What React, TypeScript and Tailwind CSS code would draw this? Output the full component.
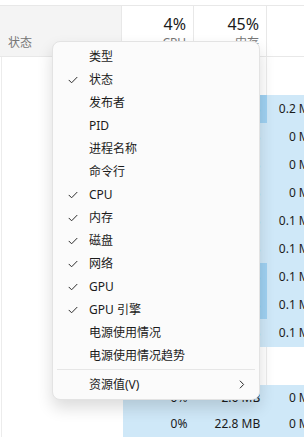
import React from 'react';

const FONT = { fontFamily: '"Noto Sans", "Noto Sans CJK SC", sans-serif' };

const menuItems = [
  { label: '类型', checked: false },
  { label: '状态', checked: true },
  { label: '发布者', checked: false },
  { label: 'PID', checked: false },
  { label: '进程名称', checked: false },
  { label: '命令行', checked: false },
  { label: 'CPU', checked: true },
  { label: '内存', checked: true },
  { label: '磁盘', checked: true },
  { label: '网络', checked: true },
  { label: 'GPU', checked: true },
  { label: 'GPU 引擎', checked: true },
  { label: '电源使用情况', checked: false },
  { label: '电源使用情况趋势', checked: false },
];

const topRows = [
  { cpu: '0.3%', mem: '126.4 MB', disk: '0.2 MB/秒', hot: true },
  { cpu: '0%', mem: '8.1 MB', disk: '0 MB/秒', hot: false },
  { cpu: '0%', mem: '12.6 MB', disk: '0 MB/秒', hot: false },
  { cpu: '0%', mem: '5.4 MB', disk: '0 MB/秒', hot: false },
  { cpu: '0%', mem: '31.0 MB', disk: '0.1 MB/秒', hot: false },
  { cpu: '0%', mem: '18.7 MB', disk: '0.1 MB/秒', hot: false },
  { cpu: '0.1%', mem: '98.2 MB', disk: '0.1 MB/秒', hot: true },
  { cpu: '0%', mem: '104.5 MB', disk: '0.1 MB/秒', hot: true },
  { cpu: '0%', mem: '22.3 MB', disk: '0.1 MB/秒', hot: false },
];

const bottomRows = [
  { cpu: '0%', mem: '2.6 MB', disk: '0 MB/秒' },
  { cpu: '0%', mem: '22.8 MB', disk: '0 MB/秒' },
];

const CheckMark = () => (
  <svg width="10" height="8" viewBox="0 0 10 8" fill="none">
    <path d="M1 4.2 L3.6 6.8 L9 1.3" stroke="#2b2b2b" strokeWidth="1" strokeLinecap="round" strokeLinejoin="round" />
  </svg>
);

const Chevron = () => (
  <svg width="6" height="9" viewBox="0 0 6 9" fill="none">
    <path d="M1.2 1 L4.6 4.5 L1.2 8" stroke="#2b2b2b" strokeWidth="1" strokeLinecap="round" strokeLinejoin="round" />
  </svg>
);

function ContextMenu() {
  return (
    <div className="absolute left-[52px] top-[41px] w-[208px] rounded-[8px] border border-[#e3e3e3] bg-[#fbfbfb] pt-[3px] pb-[3px] shadow-[0_8px_16px_rgba(0,0,0,0.14)] text-[12px] text-[#1b1b1b]">
      {menuItems.map(item => (
        <div key={item.label} className="flex h-[23px] items-center pl-[15px]">
          <span className="flex w-[21px] items-center">{item.checked && <CheckMark />}</span>
          <span>{item.label}</span>
        </div>
      ))}
      <div className="mx-[4px] mt-[2px] mb-[3px] h-px bg-[#e6e6e6]" />
      <div className="flex h-[23px] items-center pl-[15px] pr-[14px]">
        <span className="w-[21px]" />
        <span className="flex-1">资源值(V)</span>
        <Chevron />
      </div>
    </div>
  );
}

export default function App() {
  return (
    <div className="relative h-[437px] w-[304px] overflow-hidden bg-white text-[12px] text-[#1b1b1b]" style={FONT}>
      <div className="w-[340px] pt-[5px]">
        {/* header */}
        <div className="flex h-[52px] border-t border-b border-[#e8e8e8]">
          <div className="flex w-[122px] items-end bg-[#f4f4f4] pb-[5px] pl-[8px] text-[#767676] border-r border-[#e8e8e8]">
            <span className="leading-[16px]">状态</span>
          </div>
          <div className="flex w-[72px] flex-col items-end justify-end pb-[5px] pr-[7px] border-r border-[#e8e8e8]">
            <span className="text-[16px] leading-[22px]">4%</span>
            <span className="leading-[16px] text-[#767676]">CPU</span>
          </div>
          <div className="flex w-[73px] flex-col items-end justify-end pb-[5px] pr-[7px] border-r border-[#e8e8e8]">
            <span className="text-[16px] leading-[22px]">45%</span>
            <span className="leading-[16px] text-[#767676]">内存</span>
          </div>
          <div className="w-[73px]" />
        </div>

        {/* body */}
        <div className="ml-[1px] border-l border-[#ececec]">
          <div className="flex h-[38px]">
            <div className="w-[120px]" />
            <div className="w-[72px] border-r border-[#ececec]" />
            <div className="w-[73px] border-r border-[#ececec]" />
          </div>
          {topRows.map((r, i) => (
            <div key={i} className="flex h-[28px] items-center">
              <div className="h-full w-[121px]" />
              <div className="flex h-full w-[72px] items-center justify-end bg-[#cfe8f8] pr-[7px]">{r.cpu}</div>
              <div className={`flex h-full w-[73px] items-center justify-end pr-[7px] ${r.hot ? 'bg-[#9fd1f2]' : 'bg-[#cfe8f8]'}`}>{r.mem}</div>
              <div className="flex h-full w-[73px] items-center justify-end bg-[#cfe8f8] pr-[6px]">{r.disk}</div>
            </div>
          ))}
          <div className="flex h-[38px]">
            <div className="w-[120px]" />
            <div className="w-[72px] border-r border-[#ececec]" />
            <div className="w-[73px] border-r border-[#ececec]" />
          </div>
          {bottomRows.map((r, i) => (
            <div key={i} className="flex h-[26px] items-center">
              <div className="h-full w-[121px]" />
              <div className="flex h-full w-[72px] items-center justify-end bg-[#cfe8f8] pr-[7px]">{r.cpu}</div>
              <div className="flex h-full w-[73px] items-center justify-end bg-[#cfe8f8] pr-[7px]">{r.mem}</div>
              <div className="flex h-full w-[73px] items-center justify-end bg-[#cfe8f8] pr-[6px]">{r.disk}</div>
            </div>
          ))}
        </div>
      </div>

      <ContextMenu />
    </div>
  );
}
